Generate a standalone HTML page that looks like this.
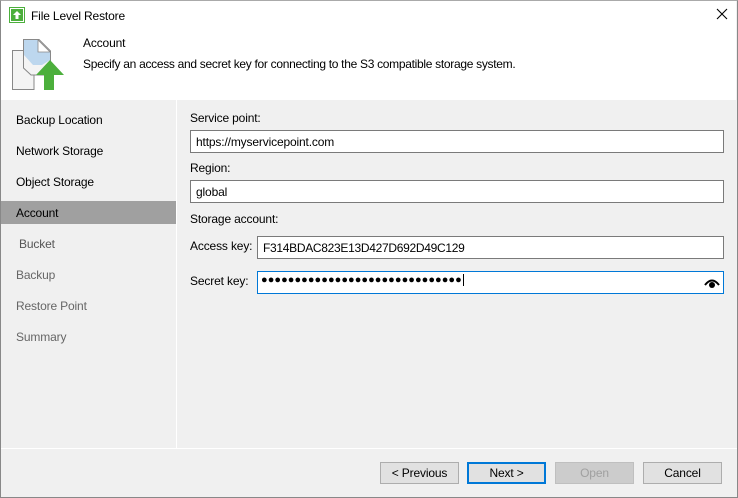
<!DOCTYPE html>
<html><head><meta charset="utf-8"><style>
*{box-sizing:border-box;margin:0;padding:0}
body{width:738px;height:498px;overflow:hidden;font-family:"Liberation Sans",sans-serif;font-size:12px;letter-spacing:-0.15px;color:#000;background:#f0f0f0;position:relative}
.win{position:absolute;left:0;top:0;width:738px;height:498px;border:1px solid #888;border-top:1px solid #aaa;z-index:5;pointer-events:none}
.title{position:absolute;left:0;top:0;width:736px;height:30px;background:#fff}
.hdr{position:absolute;left:0;top:30px;width:736px;height:70px;background:#fff}
.abs{position:absolute;white-space:nowrap}
.side{position:absolute;left:0;top:100px;width:177px;height:348px;background:#f0f0f0;border-right:1px solid #fff}
.side div{position:absolute;left:16px}
.inp{position:absolute;background:#fff;border:1px solid #7a7a7a;height:23px;padding:4px 5px;font-size:12px}
.btn{position:absolute;top:462px;width:79px;height:22px;border:1px solid #adadad;background:#e1e1e1;text-align:center;line-height:20px;font-size:12px}
</style></head><body>
<div class="win"></div>
<div class="title">
 <svg class="abs" style="left:9px;top:7px" width="16" height="16"><rect x="0.5" y="0.5" width="15" height="15" fill="#fff" stroke="#4caf3c"/><rect x="2" y="2" width="12" height="12" fill="#4caf3c"/><path d="M8 4 L12 8 H9.5 V12 H6.5 V8 H4Z" fill="#fff"/></svg>
 <div class="abs" style="left:31px;top:9px">File Level Restore</div>
 <svg class="abs" style="left:716px;top:8px" width="12" height="12"><path d="M1 1L11 11M11 1L1 11" stroke="#000" stroke-width="1.1"/></svg>
</div>
<div class="hdr">
 <svg class="abs" style="left:0;top:0" width="70" height="70">
  <path d="M12.5 20.5H27L34 27.5V59.5H12.5Z" fill="#f4f4f4" stroke="#888"/>
  <path d="M23.5 9.5H39L50.5 21V45H31L23.5 38Z" fill="#f4f4f4" stroke="#888"/>
  <path d="M24 10H38V21H50V30L42 35H33L24 25Z" fill="#bdd7ee"/>
  <path d="M38 10L50 22H38Z" fill="#fff" stroke="#888" stroke-width="0.8"/>
  <path d="M36 45L50 30L64 45H54V60H44V45Z" fill="#4caf3c"/>
 </svg>
 <div class="abs" style="left:83px;top:6px">Account</div>
 <div class="abs" style="left:83px;top:27px;letter-spacing:-0.3px">Specify an access and secret key for connecting to the S3 compatible storage system.</div>
</div>
<div class="side">
 <div style="top:13px">Backup Location</div>
 <div style="top:44px">Network Storage</div>
 <div style="top:75px">Object Storage</div>
 <div style="left:0;top:101px;width:176px;height:23px;background:#a0a0a0"></div>
 <div style="top:106px">Account</div>
 <div style="top:137px;left:19px;color:#555">Bucket</div>
 <div style="top:168px;color:#666">Backup</div>
 <div style="top:199px;color:#666">Restore Point</div>
 <div style="top:230px;color:#666">Summary</div>
</div>
<div class="abs" style="left:190px;top:111px">Service point:</div>
<div class="inp" style="left:190px;top:130px;width:534px">https://myservicepoint.com</div>
<div class="abs" style="left:190px;top:161px">Region:</div>
<div class="inp" style="left:190px;top:180px;width:534px">global</div>
<div class="abs" style="left:190px;top:212px">Storage account:</div>
<div class="abs" style="left:190px;top:239px">Access key:</div>
<div class="inp" style="left:257px;top:236px;width:467px;letter-spacing:-0.3px">F314BDAC823E13D427D692D49C129</div>
<div class="abs" style="left:190px;top:274px">Secret key:</div>
<div class="inp" style="left:257px;top:271px;width:467px;border-color:#0078d7;padding:2px 3px;font-size:11px;letter-spacing:0.05px">●●●●●●●●●●●●●●●●●●●●●●●●●●●●●●<span style="border-left:1px solid #000;margin-left:1px"></span></div>
<svg class="abs" style="left:704px;top:276px" width="16" height="14"><path d="M1 9 Q8 0 15 9" stroke="#000" stroke-width="2" fill="none"/><circle cx="8" cy="9" r="3" fill="#000"/></svg>
<div class="abs" style="left:1px;top:448px;width:736px;height:1px;background:#fff"></div>
<div class="btn" style="left:380px">&lt; Previous</div>
<div class="btn" style="left:467px;border:2px solid #0078d7;line-height:18px">Next &gt;</div>
<div class="btn" style="left:555px;color:#a0a0a0;background:#ccc;border-color:#bfbfbf">Open</div>
<div class="btn" style="left:643px">Cancel</div>
</body></html>
